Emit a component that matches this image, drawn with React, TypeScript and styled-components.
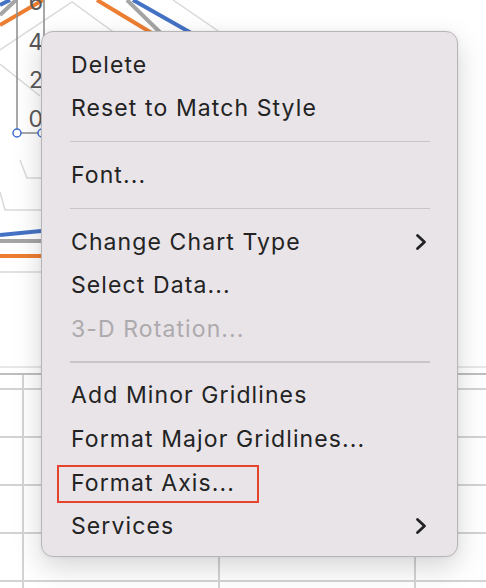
import React from "react";
import styled, { createGlobalStyle } from "styled-components";

const GlobalStyle = createGlobalStyle`
  html, body {
    margin: 0;
    padding: 0;
    background: #ffffff;
  }
  body {
    font-family: Inter, "Noto Sans", sans-serif;
  }
`;

const Page = styled.div`
  position: relative;
  width: 486px;
  height: 588px;
  overflow: hidden;
  background: #ffffff;
`;

const ChartArea = styled.div`
  height: 375px;
`;

const ChartDrawing = styled.svg`
  display: block;
`;

const Sheet = styled.div`
  display: grid;
  grid-template-columns: 22px 194px 194px 1fr;
  grid-template-rows: 13px repeat(5, 46px);
  gap: 2px;
  background: #d3d3d3;
`;

const Cell = styled.div`
  background: #ffffff;
`;

const Menu = styled.div`
  position: absolute;
  left: 41px;
  top: 31px;
  width: 417px;
  box-sizing: border-box;
  padding: 11px 0 8px;
  background: #e8e4e8;
  border: 1px solid #b8b5b8;
  border-radius: 12px;
  box-shadow: 0 10px 28px rgba(0, 0, 0, 0.17), 0 0 4px rgba(0, 0, 0, 0.06);
  font-family: Inter, "Noto Sans", sans-serif;
  font-size: 23px;
  letter-spacing: 1.1px;
`;

const Item = styled.div<{ $disabled?: boolean }>`
  position: relative;
  display: flex;
  align-items: center;
  justify-content: space-between;
  height: 43.6px;
  padding: 0 30px 0 29px;
  color: ${(p) => (p.$disabled ? "#adaaad" : "#232323")};
`;

const Separator = styled.div`
  display: flex;
  align-items: center;
  height: 23px;
  padding: 0 27px 0 28px;

  &::before {
    content: "";
    flex: 1;
    height: 1.5px;
    background: #c8c5c8;
  }
`;

const Highlight = styled.span`
  position: absolute;
  left: 15px;
  top: 4px;
  width: 202px;
  height: 38px;
  box-sizing: border-box;
  border: 2px solid #e4432c;
  pointer-events: none;
`;

const Chevron = () => (
  <svg width="12" height="18" viewBox="0 0 12 18">
    <path
      d="M2.5 2.5 L9.5 9 L2.5 15.5"
      fill="none"
      stroke="#232323"
      strokeWidth="2.8"
      strokeLinecap="round"
      strokeLinejoin="round"
    />
  </svg>
);

type Entry =
  | { kind: "sep" }
  | { kind: "item"; label: string; disabled?: boolean; submenu?: boolean; marked?: boolean };

const entries: Entry[] = [
  { kind: "item", label: "Delete" },
  { kind: "item", label: "Reset to Match Style" },
  { kind: "sep" },
  { kind: "item", label: "Font..." },
  { kind: "sep" },
  { kind: "item", label: "Change Chart Type", submenu: true },
  { kind: "item", label: "Select Data..." },
  { kind: "item", label: "3-D Rotation...", disabled: true },
  { kind: "sep" },
  { kind: "item", label: "Add Minor Gridlines" },
  { kind: "item", label: "Format Major Gridlines..." },
  { kind: "item", label: "Format Axis...", marked: true },
  { kind: "item", label: "Services", submenu: true },
];

const Chart = () => (
  <ChartDrawing width="486" height="375" viewBox="0 0 486 375">
    <g fill="none" stroke="#d9d9d9" strokeWidth="1.5">
      <path d="M0 50 L72 2 L160 66" />
      <path d="M173 0 L240 46" />
      <path d="M0 64 L40 96" />
      <path d="M20 160 L27 178 L41 178" />
      <path d="M0 192 L5 210 L41 210" />
      <path d="M0 272 L41 272" />
    </g>
    <g fill="none" strokeWidth="4">
      <path d="M0 25 L43 0 M97 0 L160 38 M0 256 L41 256" stroke="#ed7d31" />
      <path d="M0 15 L16 0 M127 0 L170 42 M0 241 L41 241" stroke="#a5a5a5" />
      <path d="M0 5 L10 0 M133 0 L200 38 M0 235 L41 231" stroke="#4472c4" />
    </g>
    <g fill="none" stroke="#8c8c8c" strokeWidth="1.5">
      <path d="M17 0 L17 133 M44 0 L44 133 M17 133 L44 133" />
    </g>
    <g fontFamily="Inter, sans-serif" fontSize="23" fill="#595959" textAnchor="end">
      <text x="43" y="10">6</text>
      <text x="43" y="50">4</text>
      <text x="43" y="88">2</text>
      <text x="43" y="127">0</text>
    </g>
    <circle cx="17" cy="133" r="4" fill="#ffffff" stroke="#3f6fd0" strokeWidth="1.5" />
    <circle cx="42" cy="133" r="4" fill="#ffffff" stroke="#3f6fd0" strokeWidth="1.5" />
    <path d="M0 367 L486 367" stroke="#d0d0d0" strokeWidth="1" />
    <path d="M0 374 L486 374" stroke="#a9a9a9" strokeWidth="1.5" />
  </ChartDrawing>
);

export default function App() {
  return (
    <>
      <GlobalStyle />
      <Page>
        <ChartArea>
          <Chart />
        </ChartArea>
        <Sheet>
          {Array.from({ length: 24 }).map((_, i) => (
            <Cell key={i} />
          ))}
        </Sheet>
        <Menu>
          {entries.map((e, i) =>
            e.kind === "sep" ? (
              <Separator key={i} />
            ) : (
              <Item key={i} $disabled={e.disabled}>
                <span>{e.label}</span>
                {e.submenu && <Chevron />}
                {e.marked && <Highlight />}
              </Item>
            )
          )}
        </Menu>
      </Page>
    </>
  );
}
